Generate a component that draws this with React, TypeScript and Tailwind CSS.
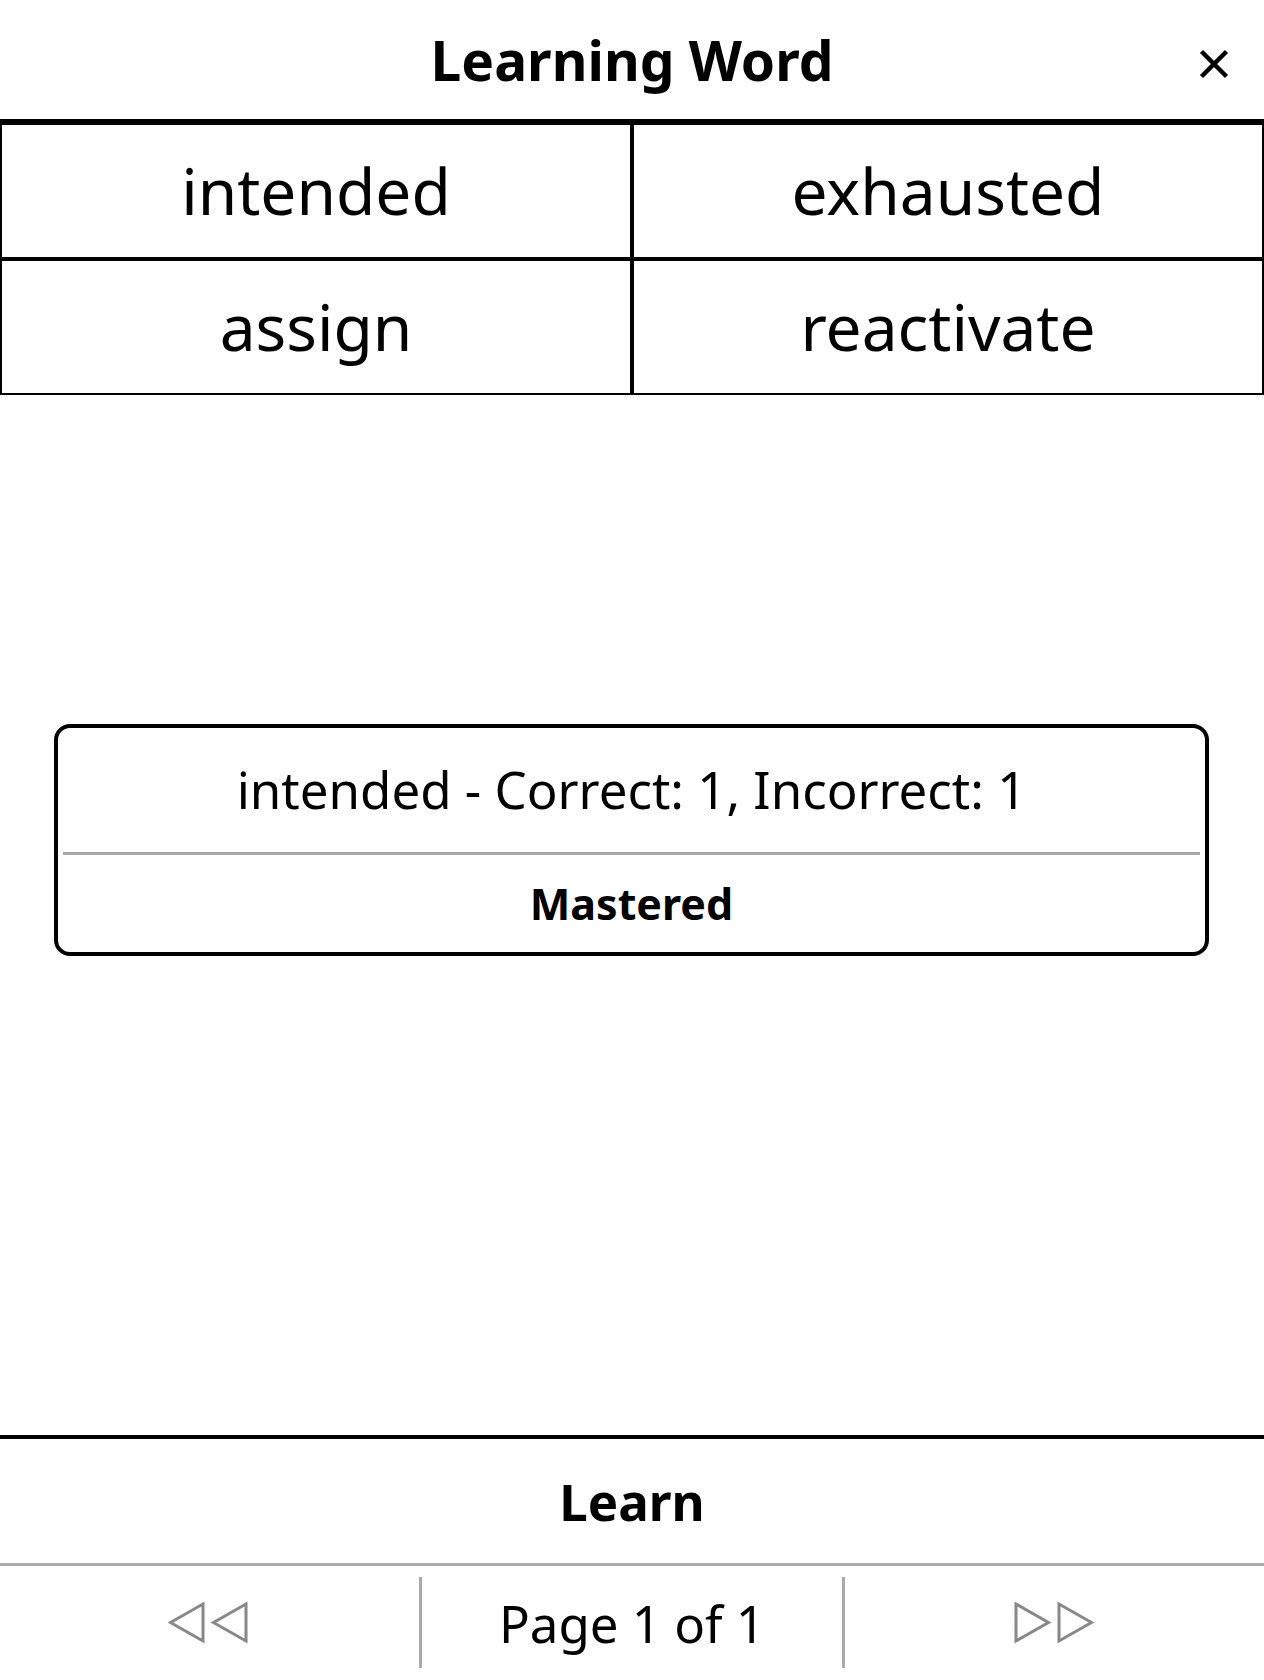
import React from "react";

const words = ["intended", "exhausted", "assign", "reactivate"];

function Arrows({ flip = false }: { flip?: boolean }) {
  return (
    <svg width="80" height="43" viewBox="0 0 80 43" fill="none" stroke="#888888" strokeWidth="3" aria-hidden="true">
      {flip ? (
        <path d="M2 3V40L34.500 21.500ZM45 3V40L77.500 21.500Z" />
      ) : (
        <path d="M35 3V40L2.500 21.500ZM78 3V40L45.500 21.500Z" />
      )}
    </svg>
  );
}

export default function App() {
  return (
    <div className="flex min-h-screen flex-col bg-white font-['Noto_Sans',sans-serif] text-black">
      <header className="grid h-[125px] grid-cols-[100px_1fr_100px] items-center border-b-6 border-black">
        <h1 className="col-start-2 text-center text-[55px] leading-[72px] font-bold">Learning Word</h1>
        <button aria-label="Close" className="flex h-full items-center justify-center pt-2">
          <svg width="30" height="30" viewBox="0 0 30 30" stroke="black" strokeWidth="4.5" aria-hidden="true">
            <path d="M2.500 2.500L27.500 27.500M27.500 2.500L2.500 27.500" />
          </svg>
        </button>
      </header>
      <nav className="grid grid-cols-2 gap-1 border-x-2 border-b-2 border-black bg-black">
        {words.map((w) => (
          <button key={w} className="h-[132px] bg-white text-[64px] leading-[88px]">{w}</button>
        ))}
      </nav>
      <main className="flex flex-1 items-start pt-[329px] pr-[55px] pl-[54px]">
        <section className="w-full rounded-2xl border-4 border-black px-[5px]">
          <p className="flex h-[124px] items-center justify-center pb-0.5 text-[51px]">intended - Correct: 1, Incorrect: 1</p>
          <button className="h-[100px] w-full border-t-3 border-[#aaaaaa] pt-0.5 text-[43px] font-bold">Mastered</button>
        </section>
      </main>
      <footer>
        <button className="block h-[128px] w-full border-t-4 border-black text-[51px] font-bold">Learn</button>
        <div className="grid grid-cols-[1fr_3px_1fr_3px_1fr] border-t-3 border-[#aaaaaa] pt-[11px] pb-3">
          <button aria-label="Previous page" className="flex h-[91px] items-center justify-center pr-1"><Arrows /></button>
          <div className="bg-[#aaaaaa]" />
          <span className="flex items-center justify-center pt-0.5 text-[51px]">Page 1 of 1</span>
          <div className="bg-[#aaaaaa]" />
          <button aria-label="Next page" className="flex items-center justify-center"><Arrows flip /></button>
        </div>
      </footer>
    </div>
  );
}
